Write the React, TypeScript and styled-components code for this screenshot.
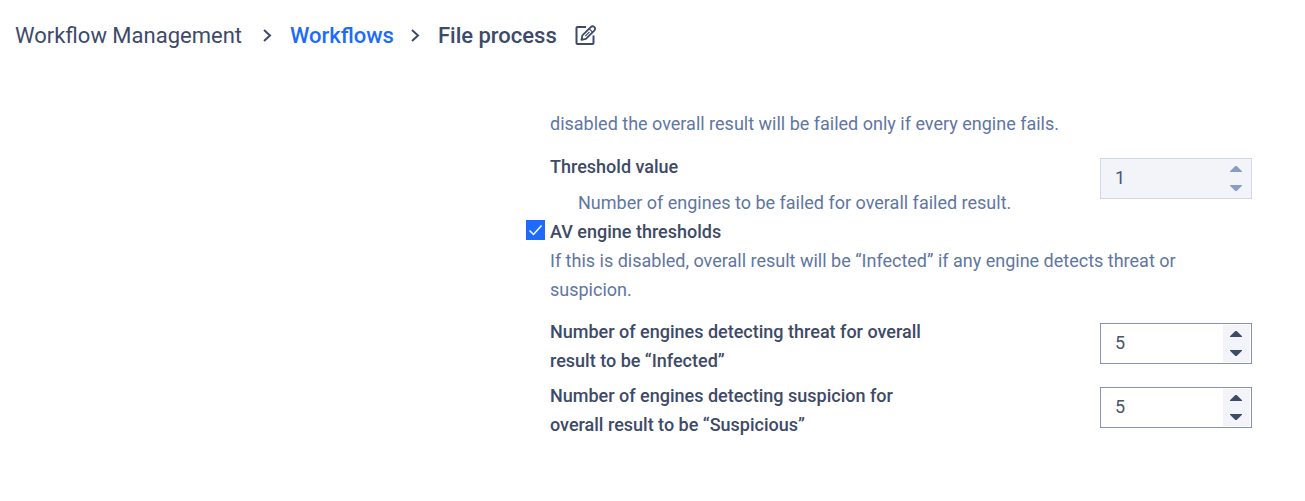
import React, { useState } from "react";
import styled, { createGlobalStyle } from "styled-components";

const GlobalStyle = createGlobalStyle`
  *, *::before, *::after { box-sizing: border-box; }
  body {
    margin: 0;
    background: #ffffff;
    color: #3d4a68;
    font: 400 18px/29px Roboto, "Liberation Sans", sans-serif;
  }
`;

const Header = styled.header`
  padding: 21px 15px 19px;
`;

const Crumbs = styled.nav`
  display: flex;
  align-items: center;
  font-size: 22px;
  line-height: 30px;
`;

const Crumb = styled.span<{ $current?: boolean }>`
  margin-right: ${(p) => (p.$current ? 0 : 4)}px;
  font-weight: ${(p) => (p.$current ? 500 : 400)};
`;

const CrumbLink = styled.a`
  color: #1d6bfc;
  font-weight: 500;
  text-decoration: none;
`;

const Separator = styled.svg`
  flex: none;
  width: 12px;
  height: 16px;
  margin: 0 16px;
`;

const EditButton = styled.button`
  display: flex;
  margin: 0 0 0 18px;
  padding: 0;
  border: 0;
  background: none;
  color: inherit;
  cursor: pointer;
`;

const Settings = styled.main`
  display: flex;
  flex-direction: column;
  margin-left: 526px;
  padding: 39px 53px 60px 0;
`;

const Indented = styled.div`
  padding-left: 24px;
`;

const Description = styled.p<{ $nested?: boolean }>`
  margin: 0;
  padding-left: ${(p) => (p.$nested ? 28 : 0)}px;
  color: #5f76a3;
`;

const Field = styled.div<{ $top: number }>`
  display: flex;
  justify-content: space-between;
  align-items: flex-start;
  margin-top: ${(p) => p.$top}px;
`;

const FieldText = styled.div`
  display: flex;
  flex-direction: column;
  gap: 7px;
`;

const Label = styled.label`
  max-width: 390px;
  font-weight: 500;
`;

const CheckRow = styled.div`
  display: flex;
  align-items: center;
  gap: 5px;
`;

const Checkbox = styled.input`
  appearance: none;
  flex: none;
  width: 19px;
  height: 20px;
  margin: 0 0 3px;
  border: 1px solid #1d6bfc;
  cursor: pointer;
  &:checked {
    background: #1d6bfc
      url("data:image/svg+xml,%3Csvg xmlns='http://www.w3.org/2000/svg' viewBox='0 0 17 18' fill='none' stroke='white' stroke-width='1.5'%3E%3Cpath d='M2.5 9.5L6.5 13.5L14.5 4.5'/%3E%3C/svg%3E")
      center / 17px 18px no-repeat;
  }
`;

const Stepper = styled.div<{ $disabled?: boolean }>`
  display: flex;
  flex: none;
  width: 152px;
  height: 41px;
  margin-top: 6px;
  padding: 1px;
  border: 1px solid ${(p) => (p.$disabled ? "#d2d9e6" : "#8593b1")};
  background: ${(p) => (p.$disabled ? "#f3f4f9" : "#ffffff")};
  color: ${(p) => (p.$disabled ? "#8b9cc4" : "#3d4a68")};
`;

const NumberInput = styled.input`
  appearance: textfield;
  flex: 1;
  min-width: 0;
  padding: 0 0 2px 13px;
  border: 0;
  outline: 0;
  background: none;
  color: #485572;
  font: inherit;
  &::-webkit-inner-spin-button,
  &::-webkit-outer-spin-button {
    appearance: none;
    margin: 0;
  }
`;

const Arrows = styled.div`
  display: flex;
  flex-direction: column;
  width: 27px;
  padding-right: 2px;
  background: #f3f4f9;
`;

const ArrowButton = styled.button`
  display: flex;
  flex: 1;
  align-items: center;
  justify-content: center;
  padding: 0;
  border: 0;
  background: none;
  color: inherit;
`;

function Chevron() {
  return (
    <Separator viewBox="0 0 12 16" fill="none" stroke="currentColor" strokeWidth="2" aria-hidden="true">
      <path d="M2 2L8 7.500L2 13" />
    </Separator>
  );
}

function EditIcon() {
  return (
    <svg width="22" height="22" viewBox="0 0 22 22" fill="none" stroke="currentColor" strokeWidth="2" strokeLinejoin="round" aria-hidden="true">
      <path d="M11 2H2.500Q1.500 2 1.500 3V18Q1.500 19 2.500 19H17.500Q18.500 19 18.500 18V10.500" />
      <path d="M6.500 14.800L7.400 10.400L16 1.800Q17.500 .6 19.200 1.900Q20.900 3.600 19.500 5.300L10.900 13.900Z" strokeWidth="1.800" />
      <path d="M14.300 3.900L17.500 7.100M10.300 11.100L14.500 6.900" strokeWidth="1.200" />
    </svg>
  );
}

interface NumberFieldProps {
  id: string;
  label: string;
  initial: number;
  top: number;
  disabled?: boolean;
  note?: string;
}

function NumberField({ id, label, initial, top, disabled, note }: NumberFieldProps) {
  const [value, setValue] = useState(initial);
  return (
    <Field $top={top}>
      <FieldText>
        <Label htmlFor={id}>{label}</Label>
        {note && <Description $nested>{note}</Description>}
      </FieldText>
      <Stepper $disabled={disabled}>
        <NumberInput
          id={id}
          type="number"
          value={value}
          disabled={disabled}
          onChange={(e) => setValue(Number(e.target.value))}
        />
        <Arrows>
          <ArrowButton type="button" aria-label="Increase" disabled={disabled} onClick={() => setValue(value + 1)}>
            <svg width="12" height="6" viewBox="0 0 12 6" fill="currentColor"><path d="M0 6V5.300L5.300 0H6.700L12 5.300V6Z" /></svg>
          </ArrowButton>
          <ArrowButton type="button" aria-label="Decrease" disabled={disabled} onClick={() => setValue(value - 1)}>
            <svg width="12" height="6" viewBox="0 0 12 6" fill="currentColor"><path d="M0 0H12V.7L6.700 6H5.300L0 .7Z" /></svg>
          </ArrowButton>
        </Arrows>
      </Stepper>
    </Field>
  );
}

export default function App() {
  const [enabled, setEnabled] = useState(true);
  return (
    <>
      <GlobalStyle />
      <Header>
        <Crumbs aria-label="Breadcrumb">
          <Crumb>Workflow Management</Crumb>
          <Chevron />
          <CrumbLink href="#workflows">Workflows</CrumbLink>
          <Chevron />
          <Crumb $current>File process</Crumb>
          <EditButton type="button" aria-label="Rename workflow">
            <EditIcon />
          </EditButton>
        </Crumbs>
      </Header>
      <Settings>
        <Indented>
          <Description>disabled the overall result will be failed only if every engine fails.</Description>
          <NumberField
            id="threshold"
            label="Threshold value"
            initial={1}
            top={14}
            disabled
            note="Number of engines to be failed for overall failed result."
          />
        </Indented>
        <CheckRow>
          <Checkbox id="av" type="checkbox" checked={enabled} onChange={(e) => setEnabled(e.target.checked)} />
          <Label htmlFor="av">AV engine thresholds</Label>
        </CheckRow>
        <Indented>
          <Description>
            If this is disabled, overall result will be “Infected” if any engine detects threat or suspicion.
          </Description>
          <NumberField id="infected" label="Number of engines detecting threat for overall result to be “Infected”" initial={5} top={13} />
          <NumberField id="suspicious" label="Number of engines detecting suspicion for overall result to be “Suspicious”" initial={5} top={6} />
        </Indented>
      </Settings>
    </>
  );
}
